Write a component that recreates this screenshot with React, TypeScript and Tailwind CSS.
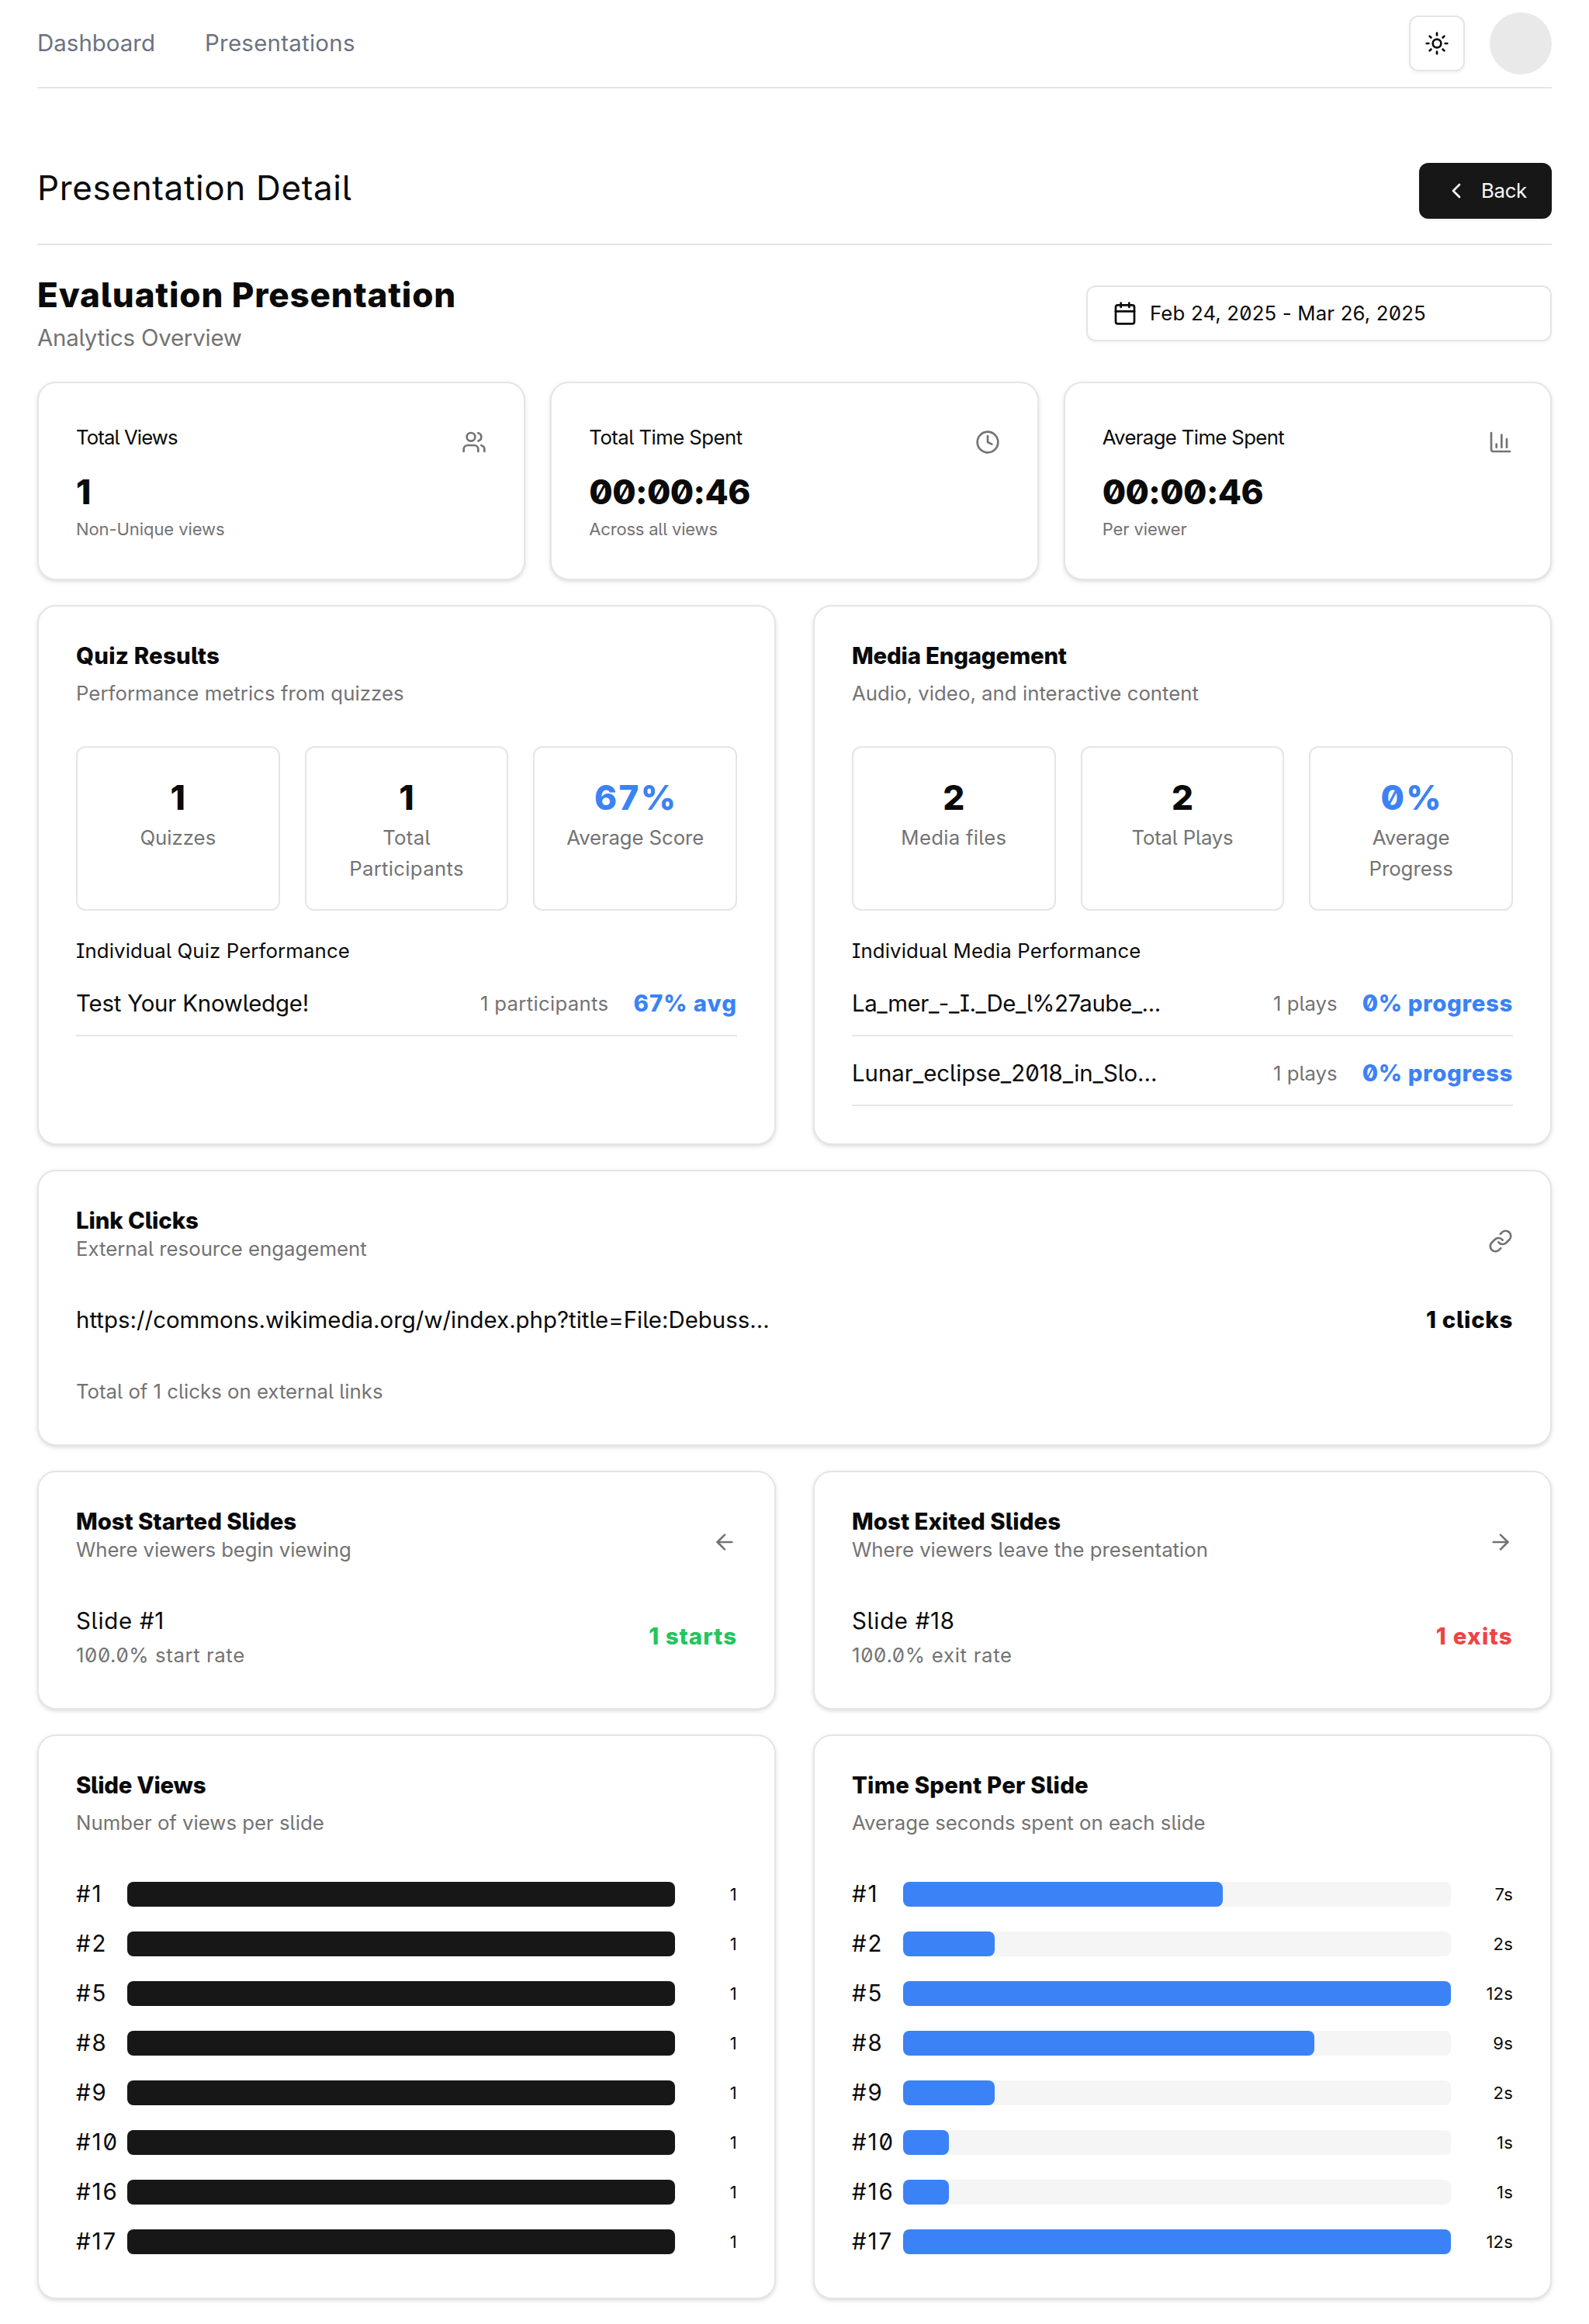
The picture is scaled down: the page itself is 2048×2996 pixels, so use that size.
import type { ReactNode } from "react";
import { ArrowLeft, ArrowRight, Calendar, ChartColumn, ChevronLeft, Clock, Link, Sun, Users, type LucideIcon } from "lucide-react";
import clsx from "clsx";

const MUTED = "text-[#737373]";
const XS = "text-[22px] leading-8";
const SM = "text-[25.75px] leading-10";
const BASE = "text-[29.4px] leading-12";
const XL = "text-[44px] leading-16";
const TITLE = "text-[29.4px] leading-8 font-extrabold";

function Card({ className, children }: { className?: string; children: ReactNode }) {
  return (
    <section
      className={clsx(
        "rounded-3xl border-2 border-[#e5e5e5] bg-white p-12 shadow-[0_2px_6px_0_rgb(0_0_0/0.1),0_2px_4px_-2px_rgb(0_0_0/0.1)]",
        className,
      )}
    >
      {children}
    </section>
  );
}

function Stat({ label, track, value, valueTrack, note, noteTrack, icon: Icon }: { label: string; track: string; value: string; valueTrack: string; note: string; noteTrack: string; icon: LucideIcon }) {
  return (
    <Card>
      <div className="flex h-15 items-start justify-between">
        <h3 className={clsx("mt-2 text-[25.75px] leading-7", track)}>{label}</h3>
        <Icon size={32} className={clsx("mt-3", MUTED)} />
      </div>
      <div className={clsx(XL, "font-extrabold", valueTrack)}>{value}</div>
      <p className={clsx(XS, MUTED, noteTrack)}>{note}</p>
    </Card>
  );
}

function Heading({ title, track, sub, subTrack }: { title: string; track: string; sub: string; subTrack: string }) {
  return (
    <div className="mb-12 flex flex-col gap-3">
      <h3 className={clsx(TITLE, track)}>{title}</h3>
      <p className={clsx(SM, MUTED, subTrack)}>{sub}</p>
    </div>
  );
}

function IconHeading({ title, track, sub, subTrack, icon: Icon }: { title: string; track: string; sub: string; subTrack: string; icon: LucideIcon }) {
  return (
    <div className="mb-12 flex items-start justify-between">
      <div>
        <h3 className={clsx(TITLE, track)}>{title}</h3>
        <p className={clsx(SM, MUTED, subTrack)}>{sub}</p>
      </div>
      <Icon size={32} className={clsx("mt-[26px]", MUTED)} />
    </div>
  );
}

function Metric({ value, valueClass, label, track }: { value: string; valueClass?: string; label: string; track?: string }) {
  return (
    <div className="rounded-xl border-2 border-[#e5e5e5] p-8 text-center">
      <div className={clsx(XL, "font-extrabold", valueClass)}>{value}</div>
      <div className={clsx(SM, MUTED, track)}>{label}</div>
    </div>
  );
}

function PerfRow({ name, track, count, countTrack, result, resultTrack }: { name: string; track: string; count: string; countTrack: string; result: string; resultTrack: string }) {
  return (
    <div className="flex items-center justify-between border-b-2 border-[#e5e5e5] pb-4">
      <span className={clsx(BASE, track)}>{name}</span>
      <div className="flex items-center gap-8">
        <span className={clsx(SM, MUTED, countTrack)}>{count}</span>
        <span className={clsx(BASE, "font-extrabold text-[#3b82f6]", resultTrack)}>{result}</span>
      </div>
    </div>
  );
}

function SlideRow({ name, track, rate, rateTrack, total, totalClass }: { name: string; track: string; rate: string; rateTrack: string; total: string; totalClass: string }) {
  return (
    <div className="flex items-center justify-between">
      <div>
        <p className={clsx(BASE, track)}>{name}</p>
        <p className={clsx(SM, MUTED, rateTrack)}>{rate}</p>
      </div>
      <span className={clsx(BASE, "font-extrabold", totalClass)}>{total}</span>
    </div>
  );
}

function Bars({ data, max, color, unit }: { data: [string, number][]; max: number; color: string; unit: string }) {
  return (
    <div className="flex flex-col gap-4">
      {data.map(([slide, value]) => (
        <div key={slide} className="flex h-12 items-center">
          <span className={clsx(BASE, "w-[66px] shrink-0 tracking-[2px]")}>{slide}</span>
          <div className="h-8 flex-1 rounded-lg bg-[#f5f5f5]">
            <div className={clsx("h-8 rounded-lg", color)} style={{ width: `${(value / max) * 100}%` }} />
          </div>
          <span className={clsx(XS, "w-20 text-right tracking-[0.2px]")}>
            {value}
            {unit}
          </span>
        </div>
      ))}
    </div>
  );
}

const views: [string, number][] = [["#1", 1], ["#2", 1], ["#5", 1], ["#8", 1], ["#9", 1], ["#10", 1], ["#16", 1], ["#17", 1]];
const times: [string, number][] = [["#1", 7], ["#2", 2], ["#5", 12], ["#8", 9], ["#9", 2], ["#10", 1], ["#16", 1], ["#17", 12]];

export default function App() {
  return (
    <div className="min-h-[2996px] bg-white px-12 pb-8 font-['Inter',sans-serif] text-[#0a0a0a] [font-feature-settings:'zero','cv05','cv08']">
      <header className="flex h-[114px] items-center justify-between border-b-2 border-[#e5e5e5]">
        <nav className={clsx(BASE, "flex gap-16 text-[#6b7280]")}>
          <a className="tracking-[0.05px]">Dashboard</a>
          <a className="tracking-[0.28px]">Presentations</a>
        </nav>
        <div className="flex items-center gap-8">
          <button className="flex size-18 items-center justify-center rounded-xl border-2 border-[#e5e5e5] shadow-[0_2px_4px_0_rgb(0_0_0/0.05)]">
            <Sun size={32} />
          </button>
          <div className="size-20 rounded-full bg-[#e9e9e9]" />
        </div>
      </header>

      <div className="flex items-start justify-between border-b-2 border-[#e5e5e5] pt-24 pb-8">
        <h1 className={clsx(XL, "tracking-[0.65px]")}>Presentation Detail</h1>
        <button className="flex h-18 w-[171px] items-center gap-4 rounded-xl bg-[#171717] pl-8 text-[25.75px] tracking-[-0.3px] text-[#fafafa] shadow-[0_2px_4px_0_rgb(0_0_0/0.05)]">
          <ChevronLeft size={32} className="shrink-0" />
          Back
        </button>
      </div>

      <div className="flex items-center justify-between py-8">
        <div>
          <h2 className={clsx(XL, "font-extrabold tracking-[0.84px]")}>Evaluation Presentation</h2>
          <p className={clsx(BASE, MUTED, "tracking-[-0.2px]")}>Analytics Overview</p>
        </div>
        <button className="flex h-18 w-[600px] items-center gap-4 rounded-xl border-2 border-[#e5e5e5] pl-8 text-[25.75px] tracking-[0.18px] shadow-[0_2px_4px_0_rgb(0_0_0/0.05)]">
          <Calendar size={32} />
          Feb 24, 2025 - Mar 26, 2025
        </button>
      </div>

      <main className="flex flex-col gap-8">
        <div className="grid grid-cols-3 gap-8">
          <Stat label="Total Views" track="tracking-[-0.9px]" value="1" valueTrack="tracking-normal" note="Non-Unique views" noteTrack="tracking-[-0.08px]" icon={Users} />
          <Stat label="Total Time Spent" track="tracking-[-0.55px]" value="00:00:46" valueTrack="tracking-[-0.6px]" note="Across all views" noteTrack="tracking-[-0.2px]" icon={Clock} />
          <Stat label="Average Time Spent" track="tracking-[-0.63px]" value="00:00:46" valueTrack="tracking-[-0.6px]" note="Per viewer" noteTrack="tracking-[-0.1px]" icon={ChartColumn} />
        </div>

        <div className="grid grid-cols-2 gap-12">
          <Card>
            <Heading title="Quiz Results" track="tracking-[0.25px]" sub="Performance metrics from quizzes" subTrack="tracking-[0.06px]" />
            <div className="grid grid-cols-3 gap-8">
              <Metric value="1" label="Quizzes" />
              <Metric value="1" label="Total Participants" track="tracking-[0.3px]" />
              <Metric value="67%" valueClass="text-[#3b82f6] tracking-[2.4px] pl-0.5" label="Average Score" track="tracking-[-0.1px]" />
            </div>
            <h4 className={clsx(SM, "mt-8 tracking-[0.13px]")}>Individual Quiz Performance</h4>
            <div className="mt-6 flex flex-col gap-6">
              <PerfRow name="Test Your Knowledge!" track="tracking-[-0.2px]" count="1 participants" countTrack="tracking-[0.3px]" result="67% avg" resultTrack="tracking-[1px]" />
            </div>
          </Card>
          <Card>
            <Heading title="Media Engagement" track="tracking-[-0.2px]" sub="Audio, video, and interactive content" subTrack="tracking-[0.03px]" />
            <div className="grid grid-cols-3 gap-8">
              <Metric value="2" label="Media files" track="tracking-[0.26px]" />
              <Metric value="2" label="Total Plays" track="tracking-[-0.2px]" />
              <Metric value="0%" valueClass="text-[#3b82f6] tracking-[2.4px] pl-0.5" label="Average Progress" />
            </div>
            <h4 className={clsx(SM, "mt-8 tracking-[0.13px]")}>Individual Media Performance</h4>
            <div className="mt-6 flex flex-col gap-6">
              <PerfRow name="La_mer_-_I._De_l%27aube_..." track="tracking-[-0.43px]" count="1 plays" countTrack="tracking-normal" result="0% progress" resultTrack="tracking-[0.65px]" />
              <PerfRow name="Lunar_eclipse_2018_in_Slo..." track="tracking-[-0.02px]" count="1 plays" countTrack="tracking-normal" result="0% progress" resultTrack="tracking-[0.65px]" />
            </div>
          </Card>
        </div>

        <Card>
          <IconHeading title="Link Clicks" track="tracking-[-0.1px]" sub="External resource engagement" subTrack="tracking-normal" icon={Link} />
          <div className={clsx(BASE, "flex items-center justify-between")}>
            <span className="tracking-[0.01px]">https://commons.wikimedia.org/w/index.php?title=File:Debuss...</span>
            <span className="font-extrabold tracking-[0.7px]">1 clicks</span>
          </div>
          <p className={clsx(SM, MUTED, "mt-12")}>Total of 1 clicks on external links</p>
        </Card>

        <div className="grid grid-cols-2 gap-12">
          <Card>
            <IconHeading title="Most Started Slides" track="tracking-[-0.08px]" sub="Where viewers begin viewing" subTrack="tracking-[-0.1px]" icon={ArrowLeft} />
            <SlideRow name="Slide #1" track="tracking-[0.75px]" rate="100.0% start rate" rateTrack="tracking-[0.6px]" total="1 starts" totalClass="text-[#22c55e] tracking-[1px]" />
          </Card>
          <Card>
            <IconHeading title="Most Exited Slides" track="tracking-[0.04px]" sub="Where viewers leave the presentation" subTrack="tracking-normal" icon={ArrowRight} />
            <SlideRow name="Slide #18" track="tracking-[0.7px]" rate="100.0% exit rate" rateTrack="tracking-[0.7px]" total="1 exits" totalClass="text-[#ef4444] tracking-[1.3px]" />
          </Card>
        </div>

        <div className="grid grid-cols-2 gap-12">
          <Card>
            <Heading title="Slide Views" track="tracking-[-0.3px]" sub="Number of views per slide" subTrack="tracking-normal" />
            <Bars data={views} max={1} color="bg-[#171717]" unit="" />
          </Card>
          <Card>
            <Heading title="Time Spent Per Slide" track="tracking-[0.22px]" sub="Average seconds spent on each slide" subTrack="tracking-normal" />
            <Bars data={times} max={12} color="bg-[#3b82f6]" unit="s" />
          </Card>
        </div>
      </main>
    </div>
  );
}
